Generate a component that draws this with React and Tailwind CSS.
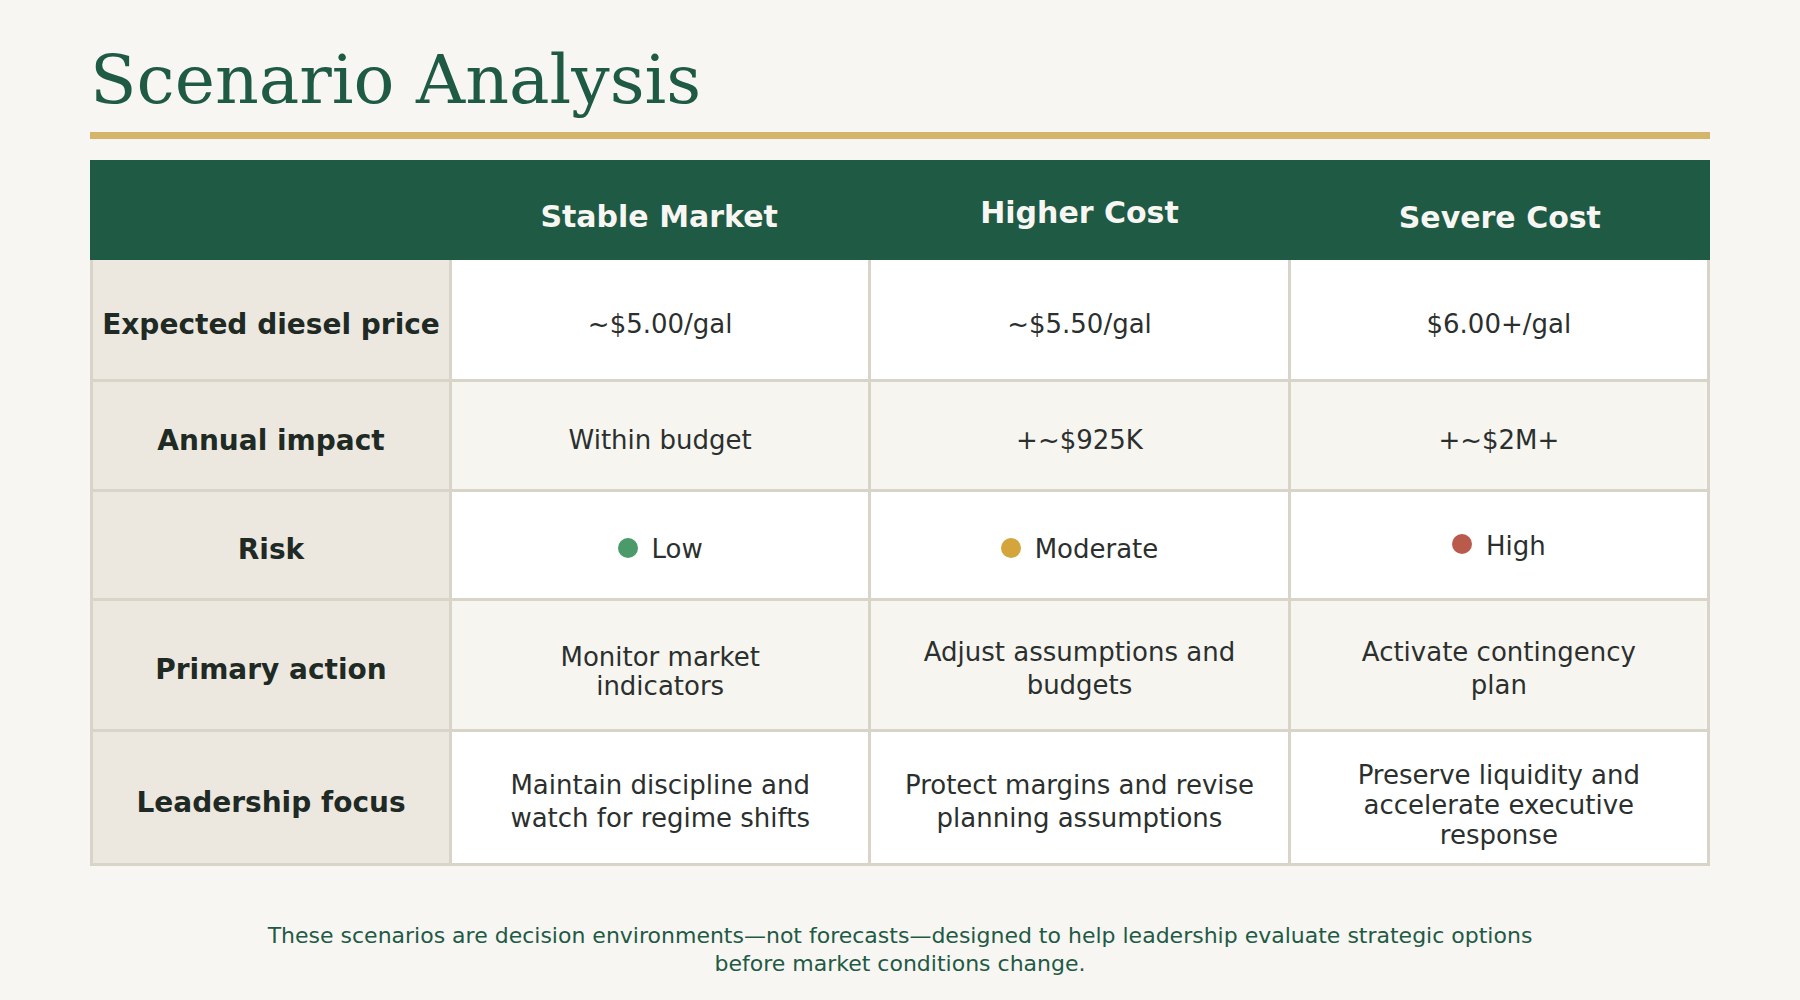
const sans = { fontFamily: '"DejaVu Sans", "Liberation Sans", sans-serif' };

const columns = [
  { title: "Stable Market", pad: "pt-[12px]" },
  { title: "Higher Cost", pad: "pt-[4px]" },
  { title: "Severe Cost", pad: "pt-[14px]" },
];

const dots = {
  green: "bg-[#4b9a69]",
  gold: "bg-[#d3a53b]",
  red: "bg-[#b95a4d]",
};

const rows = [
  {
    label: "Expected diesel price",
    height: "h-[119px]",
    bg: "bg-white",
    cells: [["~$5.00/gal"], ["~$5.50/gal"], ["$6.00+/gal"]],
  },
  {
    label: "Annual impact",
    height: "h-[107px]",
    bg: "bg-[#f7f5f0]",
    cells: [["Within budget"], ["+~$925K"], ["+~$2M+"]],
  },
  {
    label: "Risk",
    height: "h-[106px]",
    bg: "bg-white",
    risk: [
      { text: "Low", dot: "green", pad: "pt-[9px]" },
      { text: "Moderate", dot: "gold", pad: "pt-[9px]" },
      { text: "High", dot: "red", pad: "pt-[2px]" },
    ],
  },
  {
    label: "Primary action",
    height: "h-[128px]",
    bg: "bg-[#f7f5f0]",
    cells: [
      ["Monitor market", "indicators"],
      ["Adjust assumptions and", "budgets"],
      ["Activate contingency", "plan"],
    ],
    leading: [
      "leading-[29px] pt-[14px]",
      "leading-[33px] pt-[8px]",
      "leading-[33px] pt-[8px]",
    ],
  },
  {
    label: "Leadership focus",
    height: "h-[131px]",
    bg: "bg-white",
    cells: [
      ["Maintain discipline and", "watch for regime shifts"],
      ["Protect margins and revise", "planning assumptions"],
      ["Preserve liquidity and", "accelerate executive", "response"],
    ],
    leading: [
      "leading-[33px] pt-[8px]",
      "leading-[33px] pt-[8px]",
      "leading-[30px] pt-[14px]",
    ],
  },
];

function Cell({ lines, leading, bg, height }) {
  return (
    <div
      className={`${bg} ${height} flex flex-col items-center justify-center text-center text-[26px] text-[#2b302e] ${leading || "leading-[32px] pt-[8px]"}`}
    >
      {lines.map((l) => (
        <span key={l}>{l}</span>
      ))}
    </div>
  );
}

function RiskCell({ item, bg, height }) {
  return (
    <div className={`${bg} ${height} flex items-center justify-center gap-[14px] ${item.pad}`}>
      <span className={`h-[20px] w-[20px] rounded-full ${dots[item.dot]} -translate-y-[2px]`} />
      <span className="text-[26px] text-[#2b302e]">{item.text}</span>
    </div>
  );
}

export default function App() {
  return (
    <div className="min-h-screen w-full bg-[#f7f6f2] px-[90px] pt-[46px]" style={sans}>
      <h1
        className="text-[68px] leading-none text-[#1f5a45]"
        style={{ fontFamily: '"DejaVu Serif", "Liberation Serif", serif' }}
      >
        Scenario Analysis
      </h1>
      <div className="mt-[18px] h-[7px] w-full bg-[#d5b56c]" />

      <div className="mt-[21px]">
        <div className="grid h-[100px] grid-cols-[359px_1fr_1fr_1fr] bg-[#1f5a45]">
          <div />
          {columns.map((c) => (
            <div
              key={c.title}
              className={`flex items-center justify-center ${c.pad} text-[30px] font-bold text-[#f7f6f2]`}
            >
              {c.title}
            </div>
          ))}
        </div>

        <div className="grid grid-cols-[356px_1fr_1fr_1fr] gap-[3px] border-[3px] border-t-0 border-[#d8d4c8] bg-[#d8d4c8]">
          {rows.map((r) => (
            <div key={r.label} className="contents">
              <div
                className={`${r.height} flex items-center justify-center bg-[#ece8e0] pt-[10px] text-[28px] font-bold text-[#1f2a25]`}
              >
                {r.label}
              </div>
              {r.risk
                ? r.risk.map((item) => (
                    <RiskCell key={item.text} item={item} bg={r.bg} height={r.height} />
                  ))
                : r.cells.map((lines, i) => (
                    <Cell
                      key={lines[0]}
                      lines={lines}
                      bg={r.bg}
                      height={r.height}
                      leading={r.leading && r.leading[i]}
                    />
                  ))}
            </div>
          ))}
        </div>
      </div>

      <p className="mt-[56px] text-center text-[22px] leading-[28px] text-[#1f5a45]">
        These scenarios are decision environments—not forecasts—designed to help leadership evaluate strategic options
        <br />
        before market conditions change.
      </p>
    </div>
  );
}
